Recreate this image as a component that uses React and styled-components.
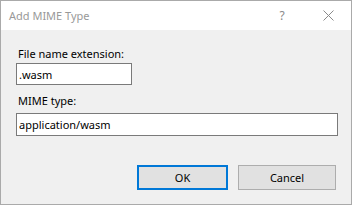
import React, { useState } from 'react';
import styled, { createGlobalStyle } from 'styled-components';

const GlobalStyle = createGlobalStyle`
  html, body {
    margin: 0;
    padding: 0;
    background: #ffffff;
  }
  body {
    font-family: "Noto Sans", "Liberation Sans", sans-serif;
    font-size: 11px;
  }
`;

const Window = styled.div`
  width: 352px;
  height: 205px;
  box-sizing: border-box;
  border: 1px solid #aaaaaa;
  background: #f0f0f0;
  display: flex;
  flex-direction: column;
`;

const TitleBar = styled.div`
  height: 29px;
  flex-shrink: 0;
  background: #ffffff;
  display: flex;
  align-items: center;
`;

const Title = styled.div`
  flex: 1;
  padding-left: 8px;
  color: #999999;
  font-size: 11px;
`;

const CaptionButton = styled.div`
  width: 46px;
  height: 29px;
  display: flex;
  align-items: center;
  justify-content: center;
  color: #8a8a8a;
  font-size: 12px;
`;

const Body = styled.div`
  flex: 1;
  padding: 16px 15px 0 15px;
  display: flex;
  flex-direction: column;
`;

const Label = styled.label`
  display: block;
  height: 16px;
  line-height: 16px;
  padding-left: 2px;
  margin-top: ${(p) => p.$top || 0}px;
  margin-bottom: ${(p) => p.$bottom || 0}px;
  color: #000000;
`;

const Input = styled.input`
  box-sizing: border-box;
  width: ${(p) => p.$width}px;
  height: ${(p) => p.$height}px;
  border: 1px solid #7a7a7a;
  background: #ffffff;
  padding: 0 2px;
  margin: 0;
  font-family: inherit;
  font-size: 11px;
  color: #000000;
  outline: none;
`;

const ButtonRow = styled.div`
  display: flex;
  justify-content: flex-end;
  gap: 10px;
  margin-top: 29px;
`;

const Button = styled.button`
  box-sizing: border-box;
  width: ${(p) => p.$width}px;
  height: 25px;
  margin: 0;
  padding: 0;
  background: #e1e1e1;
  border: ${(p) => (p.$default ? '2px solid #0078d7' : '1px solid #adadad')};
  font-family: inherit;
  font-size: 11px;
  color: #000000;
`;

function CloseIcon() {
  return (
    <svg width="11" height="11" viewBox="0 0 11 11">
      <path d="M0.5 0.5 L10.5 10.5 M10.5 0.5 L0.5 10.5" stroke="#8a8a8a" strokeWidth="1" fill="none" />
    </svg>
  );
}

export default function App() {
  const [ext, setExt] = useState('.wasm');
  const [mime, setMime] = useState('application/wasm');

  return (
    <>
      <GlobalStyle />
      <Window>
        <TitleBar>
          <Title>Add MIME Type</Title>
          <CaptionButton>?</CaptionButton>
          <CaptionButton>
            <CloseIcon />
          </CaptionButton>
        </TitleBar>
        <Body>
          <Label $bottom={1}>File name extension:</Label>
          <Input $width={116} $height={22} value={ext} onChange={(e) => setExt(e.target.value)} />
          <Label $top={8} $bottom={4}>MIME type:</Label>
          <Input $width={322} $height={23} value={mime} onChange={(e) => setMime(e.target.value)} />
          <ButtonRow>
            <Button $width={91} $default>OK</Button>
            <Button $width={98}>Cancel</Button>
          </ButtonRow>
        </Body>
      </Window>
    </>
  );
}
